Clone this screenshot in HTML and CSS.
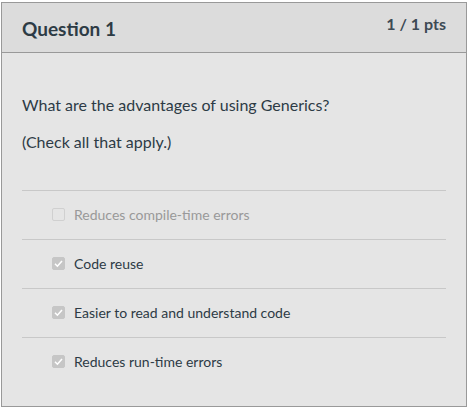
FILE: index.html
```html
<!DOCTYPE html>
<html>
<head>
<meta charset="utf-8">
<link rel="stylesheet" href="styles.css">
</head>
<body>
<div class="card">
  <div class="header">
    <h2 class="title">Question 1</h2>
    <div class="pts">1 / 1 pts</div>
  </div>
  <div class="content">
    <p class="q">What are the advantages of using Generics?</p>
    <p class="q q2">(Check all that apply.)</p>
    <div class="answers">
      <div class="answer disabled"><span class="box"></span><span>Reduces compile-time errors</span></div>
      <div class="answer"><span class="box checked"><svg viewBox="0 0 13 13" width="13" height="13"><path d="M3 6.8 L5.4 9.2 L10 4" fill="none" stroke="#fff" stroke-width="1.6"/></svg></span><span>Code reuse</span></div>
      <div class="answer"><span class="box checked"><svg viewBox="0 0 13 13" width="13" height="13"><path d="M3 6.8 L5.4 9.2 L10 4" fill="none" stroke="#fff" stroke-width="1.6"/></svg></span><span>Easier to read and understand code</span></div>
      <div class="answer"><span class="box checked"><svg viewBox="0 0 13 13" width="13" height="13"><path d="M3 6.8 L5.4 9.2 L10 4" fill="none" stroke="#fff" stroke-width="1.6"/></svg></span><span>Reduces run-time errors</span></div>
    </div>
  </div>
</div>
</body>
</html>
```
FILE: styles.css
```css
html, body {
  margin: 0;
  padding: 0;
  background: #fff;
}
body {
  font-family: Lato, "Open Sans", sans-serif;
  color: #2d3b45;
}
.card {
  margin: 2px 0 0 1px;
  width: 466px;
  height: 405px;
  box-sizing: border-box;
  border: 1px solid #999;
  background: #e5e5e5;
}
.header {
  height: 49px;
  background: #dcdcdc;
  border-bottom: 1px solid #999;
  display: flex;
  justify-content: space-between;
  align-items: flex-start;
  padding: 0 20px;
}
.title {
  margin: 13px 0 0;
  font-size: 19px;
  font-weight: bold;
  line-height: 26px;
}
.pts {
  margin-top: 10px;
  font-size: 16px;
  font-weight: bold;
  line-height: 22px;
  color: #3d4a54;
}
.content {
  padding: 0 20px;
}
.q {
  margin: 40px 0 0;
  font-size: 16px;
  line-height: 24px;
}
.q2 {
  margin-top: 13px;
}
.answers {
  margin-top: 36px;
}
.answer {
  height: 49px;
  box-sizing: border-box;
  border-top: 1px solid #c8c8c8;
  display: flex;
  align-items: center;
  padding: 0 0 2px 30px;
  font-size: 14px;
  color: #2d3b45;
}
.answer.disabled {
  color: #999;
}
.box {
  width: 13px;
  height: 13px;
  box-sizing: border-box;
  border: 1px solid #d0d0d0;
  border-radius: 2px;
  margin-right: 9px;
  display: flex;
}
.box.checked {
  background: #c6c6c6;
  border-color: #c6c6c6;
}
.box svg {
  margin: -1px;
}
```
